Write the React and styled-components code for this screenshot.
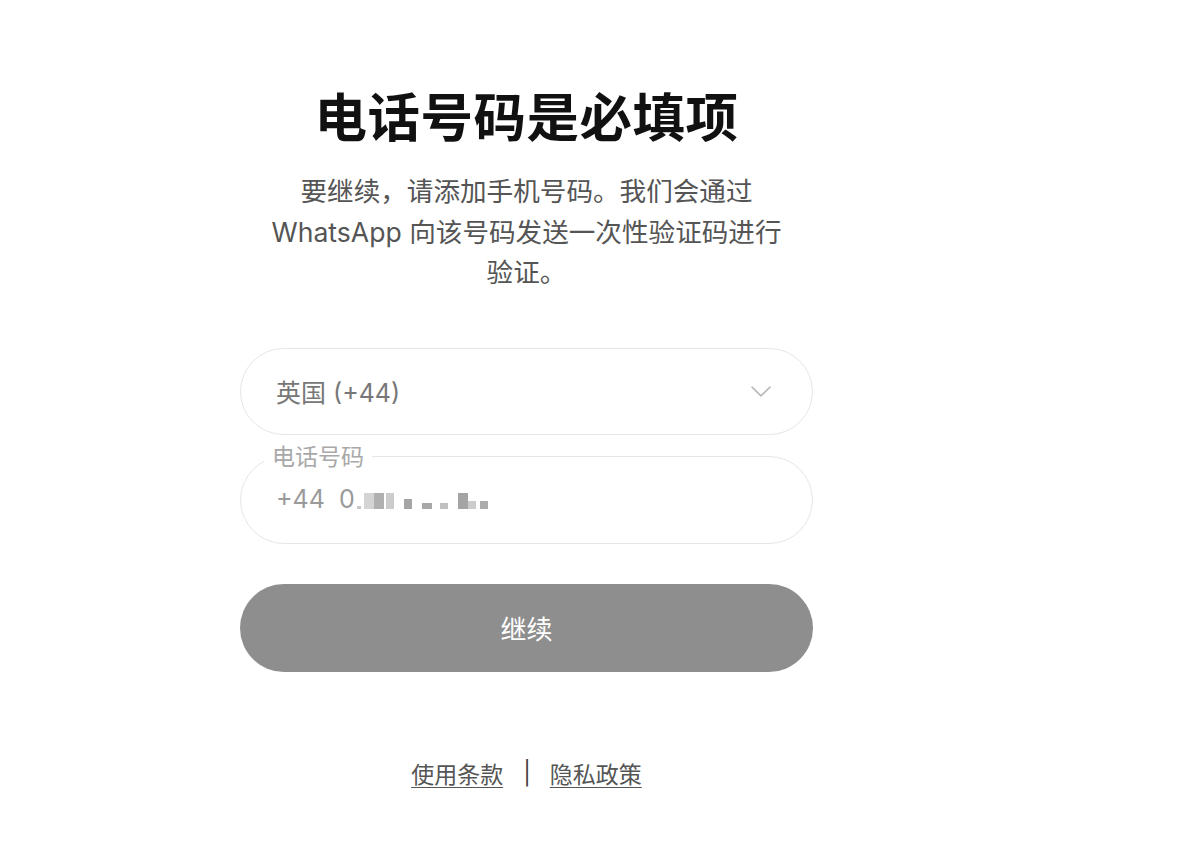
import React from "react";
import styled, { createGlobalStyle } from "styled-components";

const Global = createGlobalStyle`
  html, body { margin: 0; padding: 0; background: #ffffff; }
  body { font-family: Inter, "Noto Sans CJK SC", sans-serif; }
  * { box-sizing: border-box; }
`;

const Page = styled.main`
  width: 1200px;
  min-height: 864px;
  display: flex;
  justify-content: flex-start;
  padding-left: 240px;
  padding-top: 87px;
`;

const Column = styled.div`
  width: 573px;
  display: flex;
  flex-direction: column;
  align-items: center;
`;

const Title = styled.h1`
  margin: 0;
  font-family: Inter, "Noto Sans CJK SC", sans-serif;
  font-size: 52.5px;
  line-height: 62px;
  font-weight: 700;
  color: #111111;
  letter-spacing: 0.5px;
`;

const Subtitle = styled.p`
  margin: 22px 0 0;
  width: 535px;
  text-align: center;
  font-size: 26.6px;
  line-height: 40.5px;
  color: #555555;
  font-weight: 400;
`;

const Form = styled.form`
  width: 100%;
  margin-top: 55px;
  display: flex;
  flex-direction: column;
`;

const Select = styled.div`
  height: 87px;
  border: 1.5px solid #e6e6e6;
  border-radius: 44px;
  display: flex;
  align-items: center;
  justify-content: space-between;
  padding: 0 41px 0 35px;
  font-size: 25px;
  color: #777777;
`;

const Fieldset = styled.fieldset`
  margin: 9px 0 0;
  height: 100px;
  border: 1.5px solid #e6e6e6;
  border-radius: 44px;
  padding: 0 24px 0 23px;
`;

const Legend = styled.legend`
  padding: 0 8px;
  font-size: 23px;
  line-height: 26px;
  color: #a8a8a8;
`;

const Value = styled.div`
  display: flex;
  align-items: center;
  height: 34px;
  margin-top: 12px;
  padding-left: 12px;
  font-size: 25px;
  color: #9a9a9a;
  white-space: pre;
`;

const Redact = styled.div`
  display: flex;
  align-items: flex-end;
  height: 16px;
  margin-left: 1px;
  margin-top: 4px;
`;

const Px = styled.span`
  display: inline-block;
  width: ${(p) => p.w}px;
  height: ${(p) => p.h}px;
  margin-left: ${(p) => p.ml || 0}px;
  background: ${(p) => p.c};
`;

const Button = styled.button`
  margin-top: 40px;
  height: 88px;
  width: 100%;
  border: none;
  border-radius: 44px;
  background: #8e8e8e;
  color: #ffffff;
  font-family: Inter, "Noto Sans CJK SC", sans-serif;
  font-size: 26px;
`;

const Footer = styled.nav`
  margin-top: 84px;
  display: flex;
  align-items: center;
  font-size: 23px;
  color: #555555;
`;

const Link = styled.a`
  color: #555555;
  text-decoration: underline;
  text-underline-offset: 4px;
  text-decoration-thickness: 1px;
`;

const Sep = styled.span`
  margin: 0 19px 0 20px;
  color: #444;
`;

export default function App() {
  return (
    <>
      <Global />
      <Page>
        <Column>
          <Title>电话号码是必填项</Title>
          <Subtitle>
            要继续，请添加手机号码。我们会通过 WhatsApp 向该号码发送一次性验证码进行验证。
          </Subtitle>
          <Form onSubmit={(e) => e.preventDefault()}>
            <Select>
              <span>英国 (+44)</span>
              <svg width="20" height="11" viewBox="0 0 20 11" fill="none">
                <path d="M1 1.2 L10 9.8 L19 1.2" stroke="#b8b8b8" strokeWidth="1.6" strokeLinecap="round" strokeLinejoin="round" />
              </svg>
            </Select>
            <Fieldset>
              <Legend>电话号码</Legend>
              <Value>
                +44  0
                <Redact>
                  <Px w={4} h={3} c="#c8c8c8" ml={1} />
                  <Px w={10} h={16} c="#d4d4d4" ml={3} />
                  <Px w={10} h={16} c="#b0b0b0" />
                  <Px w={8} h={16} c="#cccccc" ml={2} />
                  <Px w={8} h={10} c="#a6a6a6" ml={10} />
                  <Px w={10} h={6} c="#a8a8a8" ml={10} />
                  <Px w={8} h={6} c="#c0c0c0" ml={8} />
                  <Px w={10} h={16} c="#a4a4a4" ml={10} />
                  <Px w={8} h={8} c="#cccccc" />
                  <Px w={8} h={8} c="#ababab" ml={4} />
                </Redact>
              </Value>
            </Fieldset>
            <Button type="submit">继续</Button>
          </Form>
          <Footer>
            <Link href="#">使用条款</Link>
            <Sep>|</Sep>
            <Link href="#">隐私政策</Link>
          </Footer>
        </Column>
      </Page>
    </>
  );
}
